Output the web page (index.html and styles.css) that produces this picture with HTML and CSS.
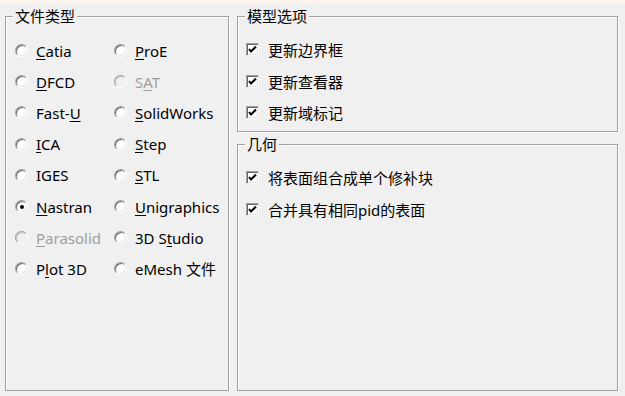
FILE: index.html
```html
<!DOCTYPE html>
<html lang="zh-CN">
<head>
    <meta charset="UTF-8">
    <title>导入选项</title>
    <link rel="stylesheet" href="styles.css">
</head>
<body>
    <div class="window">
        <fieldset class="group file-types">
            <legend>文件类型</legend>
            <div class="radio-grid">
                <label class="opt"><span class="radio"></span><span><u>C</u>atia</span></label>
                <label class="opt"><span class="radio"></span><span><u>P</u>roE</span></label>
                <label class="opt"><span class="radio"></span><span><u>D</u>FCD</span></label>
                <label class="opt disabled"><span class="radio"></span><span>S<u>A</u>T</span></label>
                <label class="opt"><span class="radio"></span><span>Fast-<u>U</u></span></label>
                <label class="opt"><span class="radio"></span><span><u>S</u>olidWorks</span></label>
                <label class="opt"><span class="radio"></span><span><u>I</u>CA</span></label>
                <label class="opt"><span class="radio"></span><span><u>S</u>tep</span></label>
                <label class="opt"><span class="radio"></span><span>IGES</span></label>
                <label class="opt"><span class="radio"></span><span><u>S</u>TL</span></label>
                <label class="opt"><span class="radio checked"></span><span><u>N</u>astran</span></label>
                <label class="opt"><span class="radio"></span><span><u>U</u>nigraphics</span></label>
                <label class="opt disabled"><span class="radio"></span><span><u>P</u>arasolid</span></label>
                <label class="opt"><span class="radio"></span><span>3D S<u>t</u>udio</span></label>
                <label class="opt"><span class="radio"></span><span>P<u>l</u>ot 3D</span></label>
                <label class="opt"><span class="radio"></span><span>eMesh 文件</span></label>
            </div>
        </fieldset>

        <div class="right-col">
            <fieldset class="group model-opts">
                <legend>模型选项</legend>
                <div class="check-list">
                    <label class="opt"><span class="check"><svg viewBox="0 0 11 11" width="11" height="11"><polyline points="2,5 4,7.5 9,2.5" fill="none" stroke="#000" stroke-width="2"/></svg></span><span>更新边界框</span></label>
                    <label class="opt"><span class="check"><svg viewBox="0 0 11 11" width="11" height="11"><polyline points="2,5 4,7.5 9,2.5" fill="none" stroke="#000" stroke-width="2"/></svg></span><span>更新查看器</span></label>
                    <label class="opt"><span class="check"><svg viewBox="0 0 11 11" width="11" height="11"><polyline points="2,5 4,7.5 9,2.5" fill="none" stroke="#000" stroke-width="2"/></svg></span><span>更新域标记</span></label>
                </div>
            </fieldset>
            <fieldset class="group geometry">
                <legend>几何</legend>
                <div class="check-list">
                    <label class="opt"><span class="check"><svg viewBox="0 0 11 11" width="11" height="11"><polyline points="2,5 4,7.5 9,2.5" fill="none" stroke="#000" stroke-width="2"/></svg></span><span>将表面组合成单个修补块</span></label>
                    <label class="opt"><span class="check"><svg viewBox="0 0 11 11" width="11" height="11"><polyline points="2,5 4,7.5 9,2.5" fill="none" stroke="#000" stroke-width="2"/></svg></span><span>合并具有相同pid的表面</span></label>
                </div>
            </fieldset>
        </div>
    </div>
</body>
</html>
```

FILE: styles.css
```css
body {
    margin: 0;
    background: #f0f0f0;
    font-family: "Noto Sans", "Noto Sans CJK SC", sans-serif;
    font-size: 14px;
    color: #000;
}

.window {
    display: grid;
    grid-template-columns: 224px 381px;
    column-gap: 8px;
    padding: 3px 0 0 5px;
    border-top: 3px solid #fbf5ee;
}

.group {
    margin: 0;
    padding: 0;
    border: 1px solid #a0a0a0;
    box-shadow: 1px 1px 0 #fff, inset 1px 1px 0 #fff;
    min-width: 0;
}

.group legend {
    margin-left: 7px;
    padding: 0 2px;
    height: 20px;
    line-height: 20px;
    font-size: 15px;
    background: #f0f0f0;
}

.file-types {
    height: 385px;
    box-sizing: border-box;
}

.right-col {
    display: flex;
    flex-direction: column;
    gap: 2px;
}

.model-opts {
    height: 126px;
    box-sizing: border-box;
}

.geometry {
    height: 257px;
    box-sizing: border-box;
}

.radio-grid {
    display: grid;
    grid-template-columns: 99px 1fr;
    grid-auto-rows: 31.2px;
    padding: 9px 0 0 9px;
}

.check-list {
    display: flex;
    flex-direction: column;
    padding: 8px 0 0 8px;
}

.check-list .opt {
    height: 31.5px;
}

.opt {
    display: flex;
    align-items: center;
    white-space: nowrap;
    font-size: 15px;
}

.opt u {
    text-underline-offset: 2px;
}

.opt.disabled {
    color: #a0a0a0;
}

.radio {
    width: 11px;
    height: 11px;
    border-radius: 50%;
    background: #fff;
    border: 1px solid;
    border-color: #a0a0a0 #fff #fff #a0a0a0;
    box-shadow: inset 1px 1px 0 #696969, inset -1px -1px 0 #e3e3e3;
    margin-right: 8px;
    flex: none;
    position: relative;
}

.disabled .radio {
    background: #f0f0f0;
    box-shadow: inset 1px 1px 0 #c8c8c8;
}

.radio.checked::after {
    content: "";
    position: absolute;
    left: 3.5px;
    top: 3.5px;
    width: 4px;
    height: 4px;
    border-radius: 50%;
    background: #000;
}

.check {
    width: 11px;
    height: 11px;
    background: #fff;
    border: 1px solid;
    border-color: #a0a0a0 #fff #fff #a0a0a0;
    box-shadow: inset 1px 1px 0 #696969, inset -1px -1px 0 #e3e3e3;
    margin-right: 9px;
    flex: none;
    display: flex;
}
```
